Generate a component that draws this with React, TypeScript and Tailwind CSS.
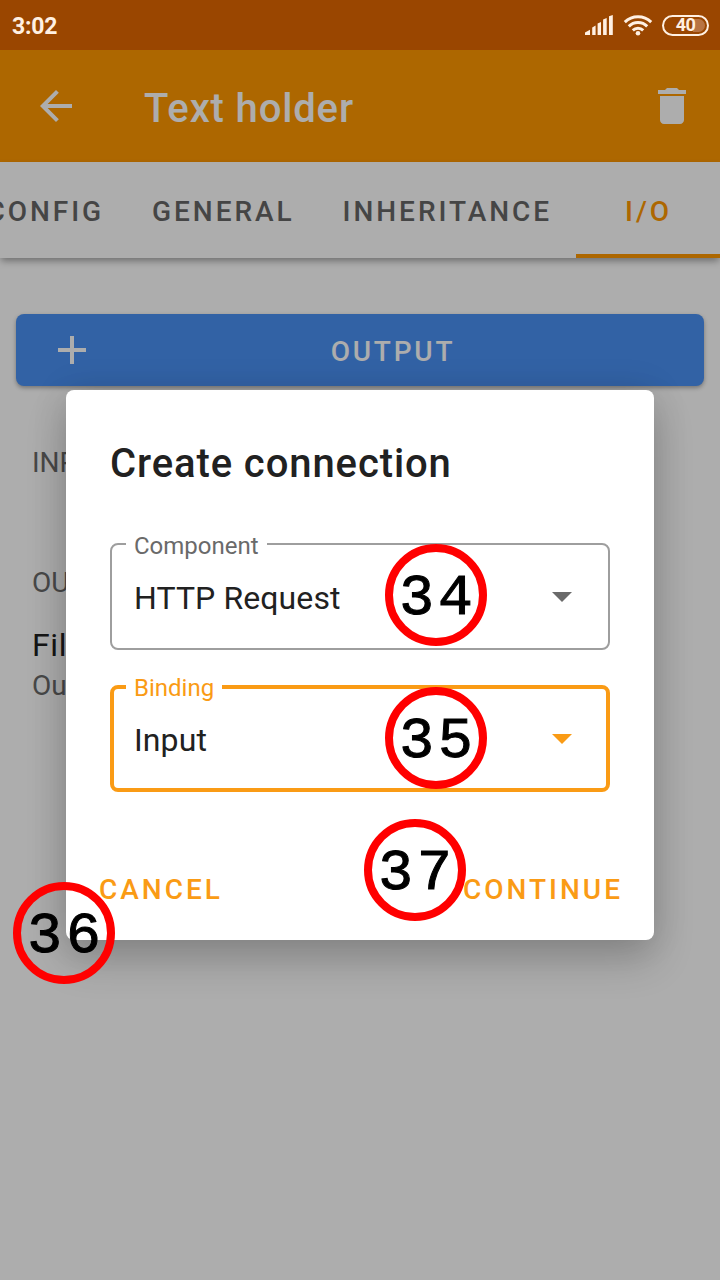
import type { ReactNode } from "react";

function StatusBar() {
  return (
    <header className="flex h-[50px] shrink-0 items-center bg-[#9a4600] pr-3 pl-3 text-[#fff0e2]">
      <span className="pt-0.5 text-[23px] font-bold leading-none tracking-[-0.2px]">3:02</span>
      <svg className="mr-[-1px] ml-auto h-5 w-7" viewBox="0 0 28 20" fill="currentColor">
        <path d="M0 20v-2.600L5 14.800V20zM7.200 20v-7.500l3.400-2V20zM12.600 20V8.600L16 7v13zM18.100 20V4.600L21.700 3v17zM24 20V1.200L27.800 0v20z" />
      </svg>
      <svg className="ml-[11px] h-[22px] w-[30px]" viewBox="0 0 30 22" fill="none" stroke="currentColor" strokeWidth="3">
        <path d="M1.800 8.200a19 19 0 0 1 26.400 0M5.800 12.400a13 13 0 0 1 18.400 0M9.800 16.400a7.500 7.500 0 0 1 10.400 0" />
        <circle cx="15" cy="19.300" r="2.300" fill="currentColor" stroke="none" />
      </svg>
      <div className="mr-[-1px] ml-[9px] flex h-[21px] w-[47px] items-center rounded-full border-2 border-current p-0.5">
        <div className="flex h-full w-full items-center justify-center rounded-full bg-linear-to-r from-transparent from-70% to-[#b87443] to-70% text-[18px] font-bold leading-none tracking-[-0.5px]">
          <span>40</span>
        </div>
      </div>
    </header>
  );
}

function Tab({ label, active = false }: { label: string; active?: boolean }) {
  return (
    <div
      className={
        active
          ? "flex w-36 shrink-0 items-center justify-center border-b-4 border-[#ff9800] pt-2 pl-px text-[#ff9800]"
          : "flex shrink-0 items-center px-6 pt-1 text-[#666666]"
      }
    >
      {label}
    </div>
  );
}

function Marker({ value, className }: { value: string; className: string }) {
  return (
    <div
      className={
        "absolute z-20 flex h-[102px] w-[102px] items-center justify-center rounded-full border-8 border-[#ff0000] pt-[7px] pl-1 font-['Liberation_Mono',monospace] text-[58px] leading-none tracking-[4px] text-black [-webkit-text-stroke:1px_black] " +
        className
      }
    >
      {value}
    </div>
  );
}

function SelectField({ label, value, focused = false }: { label: string; value: string; focused?: boolean }) {
  return (
    <div
      className={
        focused
          ? "relative flex h-[107px] items-center justify-between rounded-lg border-4 border-[#fa9b15] pr-[34px] pl-5 text-[#fa9b15]"
          : "relative flex h-[107px] items-center justify-between rounded-lg border-2 border-[#9e9e9e] pr-9 pl-[22px] text-[#6a6a6a]"
      }
    >
      <span
        className={
          focused
            ? "absolute top-[-15px] left-3 bg-white px-2 text-2xl leading-7"
            : "absolute top-[-13px] left-3.5 bg-white px-2 text-2xl leading-7"
        }
      >
        {label}
      </span>
      <span className="pt-0.5 text-[32px] leading-none tracking-[0.1px] text-[#212121]">{value}</span>
      <svg className="h-2.5 w-5" viewBox="0 0 20 10" fill="currentColor">
        <path d="M0 0h20L10 10z" />
      </svg>
    </div>
  );
}

function Section({ children }: { children: ReactNode }) {
  return <div className="px-8 text-[28px] leading-10 text-[#6b6b6b]">{children}</div>;
}

export default function App() {
  return (
    <div className="relative flex h-[1280px] w-[720px] flex-col overflow-hidden bg-white font-[Roboto,sans-serif]">
      <StatusBar />
      <div className="relative flex flex-1 flex-col">
        <div className="flex h-28 shrink-0 items-center bg-[#ff9800] pr-6 pl-8 text-white">
          <svg className="h-12 w-12" viewBox="0 0 24 24" fill="currentColor">
            <path d="M20 11H7.830l5.590-5.590L12 4l-8 8 8 8 1.410-1.410L7.830 13H20z" />
          </svg>
          <h1 className="ml-16 pt-1.5 text-[40px] font-medium leading-none tracking-[0.85px]">Text holder</h1>
          <svg className="ml-auto h-12 w-12" viewBox="0 0 24 24" fill="currentColor">
            <path d="M6 19c0 1.100.9 2 2 2h8c1.100 0 2-.9 2-2V7H6zM19 4h-3.500l-1-1h-5l-1 1H5v2h14z" />
          </svg>
        </div>
        <nav className="z-0 flex h-24 shrink-0 justify-end bg-white text-[28px] font-medium leading-none tracking-[2.95px] shadow-[0_4px_7px_-1px_rgba(0,0,0,0.36)]">
          <Tab label="CONFIG" />
          <Tab label="GENERAL" />
          <Tab label="INHERITANCE" />
          <Tab label="I/O" active />
        </nav>
        <main className="flex flex-col pt-14">
          <button className="mx-4 flex h-[72px] items-center rounded-lg bg-[#4a91f4] pr-8 pl-8 text-white shadow-[0_2px_4px_rgba(0,0,0,0.32)]">
            <svg className="h-12 w-12" viewBox="0 0 24 24" fill="currentColor">
              <path d="M19 13h-6v6h-2v-6H5v-2h6V5h2v6h6z" />
            </svg>
            <span className="flex-1 pt-1 pl-[18px] text-center text-[28px] font-medium leading-none tracking-[2.8px]">OUTPUT</span>
          </button>
          <div className="mt-[57px] flex flex-col">
            <Section>INPUTS</Section>
            <div className="h-20" />
            <Section>OUTPUTS</Section>
            <div className="mt-[22px] mb-px px-8 text-[32px] leading-10 tracking-[0.6px] text-[#212121]">File</div>
            <Section>Output</Section>
          </div>
        </main>
        <div className="absolute inset-0 bg-black/32" />
      </div>

      <div className="absolute top-[390px] left-[66px] flex h-[550px] w-[588px] flex-col rounded-lg bg-white px-11 shadow-[0_20px_40px_rgba(0,0,0,0.2),0_0_36px_rgba(0,0,0,0.1)]">
        <h2 className="pt-[54px] text-[40px] font-medium leading-10 tracking-[0.9px] text-[#212121]">Create connection</h2>
        <div className="mt-[59px] flex flex-col gap-[35px]">
          <SelectField label="Component" value="HTTP Request" />
          <SelectField label="Binding" value="Input" focused />
        </div>
        <div className="mt-[82px] mr-[-13px] ml-[-11px] flex justify-between text-[28px] font-medium leading-8 tracking-[3px] text-[#fa9b15]">
          <button>CANCEL</button>
          <button>CONTINUE</button>
        </div>
      </div>

      <Marker value="34" className="top-[544px] left-[385px]" />
      <Marker value="35" className="top-[687px] left-[385px]" />
      <Marker value="36" className="top-[882px] left-[13px]" />
      <Marker value="37" className="top-[819px] left-[364px]" />
    </div>
  );
}
